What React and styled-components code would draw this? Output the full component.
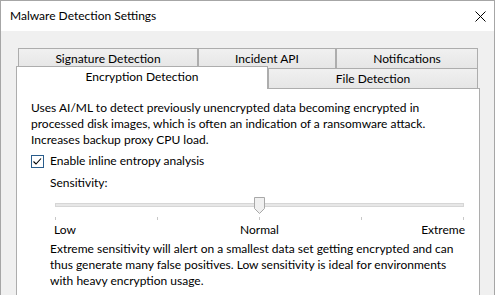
import React from "react";
import styled, { createGlobalStyle } from "styled-components";

const Global = createGlobalStyle`
  html, body { margin: 0; padding: 0; overflow: hidden; background: #fff; }
  body {
    font-family: Lato, "Segoe UI", "Noto Sans", sans-serif;
    font-size: 12px;
    color: #000;
  }
  #root { height: 295px; }
`;

const Window = styled.div`
  width: 495px;
  height: 295px;
  box-sizing: border-box;
  border: 1px solid #a6a6a6;
  border-bottom: none;
  display: flex;
  flex-direction: column;
  background: #f0f0f0;
`;

const TitleBar = styled.div`
  height: 30px;
  flex: none;
  background: #fff;
  display: flex;
  align-items: center;
  justify-content: space-between;
  padding: 0 8px 0 9px;
`;

const Title = styled.span`
  font-size: 12px;
  line-height: 16px;
`;

const CloseButton = styled.svg`
  width: 11px;
  height: 11px;
  display: block;
`;

const Body = styled.div`
  flex: 1;
  min-height: 0;
  display: flex;
  flex-direction: column;
  padding: 17px 14px 0 15px;
`;

const TabControl = styled.div`
  flex: 1;
  min-height: 0;
  display: flex;
  flex-direction: column;
  width: 464px;
`;

const TabRow = styled.div`
  display: flex;
  align-items: flex-end;
  position: relative;
  padding: ${(p) => (p.$back ? "0 2px" : "0")};
  margin-top: ${(p) => (p.$back ? "0" : "-3px")};
  z-index: ${(p) => (p.$back ? 0 : 1)};
`;

const Tab = styled.div`
  box-sizing: border-box;
  width: ${(p) => p.$w}px;
  height: ${(p) => (p.$selected ? 23 : 21)}px;
  border: 1px solid #adadad;
  border-bottom: ${(p) => (p.$selected ? "none" : "1px solid #adadad")};
  background: ${(p) =>
    p.$selected ? "#fff" : "linear-gradient(#f0f0f0, #e6e6e6)"};
  display: flex;
  align-items: center;
  justify-content: center;
  padding-bottom: ${(p) => (p.$selected ? "2px" : "0")};
  white-space: nowrap;
  line-height: 16px;
`;

const Panel = styled.div`
  flex: 1;
  min-height: 0;
  overflow: hidden;
  margin-top: -1px;
  border: 1px solid #adadad;
  border-bottom: none;
  background: #fff;
  padding: 11px 14px 0 14px;
  display: flex;
  flex-direction: column;
  line-height: 16px;
`;

const Paragraph = styled.p`
  margin: 0;
  margin-top: ${(p) => p.$mt || 0}px;
  white-space: nowrap;
`;

const CheckRow = styled.label`
  display: flex;
  align-items: center;
  gap: 6px;
  margin-top: 5px;
  height: 16px;
`;

const CheckBox = styled.span`
  width: 13px;
  height: 13px;
  box-sizing: border-box;
  border: 1px solid #2a5d8c;
  background: #fff;
  display: flex;
  align-items: center;
  justify-content: center;
`;

const Indent = styled.div`
  padding-left: 19px;
  display: flex;
  flex-direction: column;
`;

const FieldLabel = styled.div`
  margin-top: 6px;
  height: 16px;
`;

const SliderBlock = styled.div`
  margin: 4px 0 0 5px;
  width: 409px;
  display: flex;
  flex-direction: column;
`;

const SliderBox = styled.div`
  position: relative;
  height: 19px;
  display: flex;
  align-items: center;
`;

const Track = styled.div`
  flex: 1;
  height: 2px;
  border: 1px solid #d6d6d6;
  background: #e7e7e7;
`;

const Thumb = styled.svg`
  position: absolute;
  top: 2px;
  width: 11px;
  height: 18px;
  margin-left: -5.5px;
`;

const Ticks = styled.div`
  display: flex;
  justify-content: space-between;
  margin-top: 3px;
  height: 3px;
`;

const Tick = styled.span`
  width: 1px;
  height: 3px;
  background: #c8c8c8;
`;

const ScaleLabels = styled.div`
  display: grid;
  grid-template-columns: 1fr auto 1fr;
  margin: 2px -1px 0 -1px;
  height: 16px;
`;

const ScaleLabel = styled.span`
  justify-self: ${(p) => p.$align || "center"};
`;

export default function App() {
  const value = 50;
  return (
    <>
      <Global />
      <Window>
        <TitleBar>
          <Title>Malware Detection Settings</Title>
          <CloseButton viewBox="0 0 11 11">
            <path d="M0.5 0.5 L10.5 10.5 M10.5 0.5 L0.5 10.5" stroke="#000" strokeWidth="1" />
          </CloseButton>
        </TitleBar>
        <Body>
          <TabControl>
            <TabRow $back>
              <Tab $w={180}>Signature Detection</Tab>
              <Tab $w={138}>Incident API</Tab>
              <Tab $w={142}>Notifications</Tab>
            </TabRow>
            <TabRow>
              <Tab $w={252} $selected>Encryption Detection</Tab>
              <Tab $w={210}>File Detection</Tab>
            </TabRow>
            <Panel>
              <Paragraph>
                Uses AI/ML to detect previously unencrypted data becoming encrypted in
                <br />
                processed disk images, which is often an indication of a ransomware attack.
                <br />
                Increases backup proxy CPU load.
              </Paragraph>
              <CheckRow>
                <CheckBox>
                  <svg width="11" height="11" viewBox="0 0 11 11">
                    <path d="M1.5 5.5 L4 8 L9 2.5" stroke="#000" strokeWidth="1.1" fill="none" />
                  </svg>
                </CheckBox>
                <span>Enable inline entropy analysis</span>
              </CheckRow>
              <Indent>
                <FieldLabel>Sensitivity:</FieldLabel>
                <SliderBlock>
                  <SliderBox>
                    <Track />
                    <Thumb viewBox="0 0 11 18" style={{ left: `${value}%` }}>
                      <path
                        d="M0.5 0.5 H10.5 V11.5 L5.5 16.5 L0.5 11.5 Z"
                        fill="#f0f0f0"
                        stroke="#a8a8a8"
                        strokeWidth="1"
                      />
                    </Thumb>
                  </SliderBox>
                  <Ticks>
                    {[0, 1, 2, 3, 4].map((i) => (
                      <Tick key={i} />
                    ))}
                  </Ticks>
                  <ScaleLabels>
                    <ScaleLabel $align="start">Low</ScaleLabel>
                    <ScaleLabel>Normal</ScaleLabel>
                    <ScaleLabel $align="end">Extreme</ScaleLabel>
                  </ScaleLabels>
                </SliderBlock>
                <Paragraph $mt={3}>
                  Extreme sensitivity will alert on a smallest data set getting encrypted and can
                  <br />
                  thus generate many false positives. Low sensitivity is ideal for environments
                  <br />
                  with heavy encryption usage.
                </Paragraph>
              </Indent>
            </Panel>
          </TabControl>
        </Body>
      </Window>
    </>
  );
}
